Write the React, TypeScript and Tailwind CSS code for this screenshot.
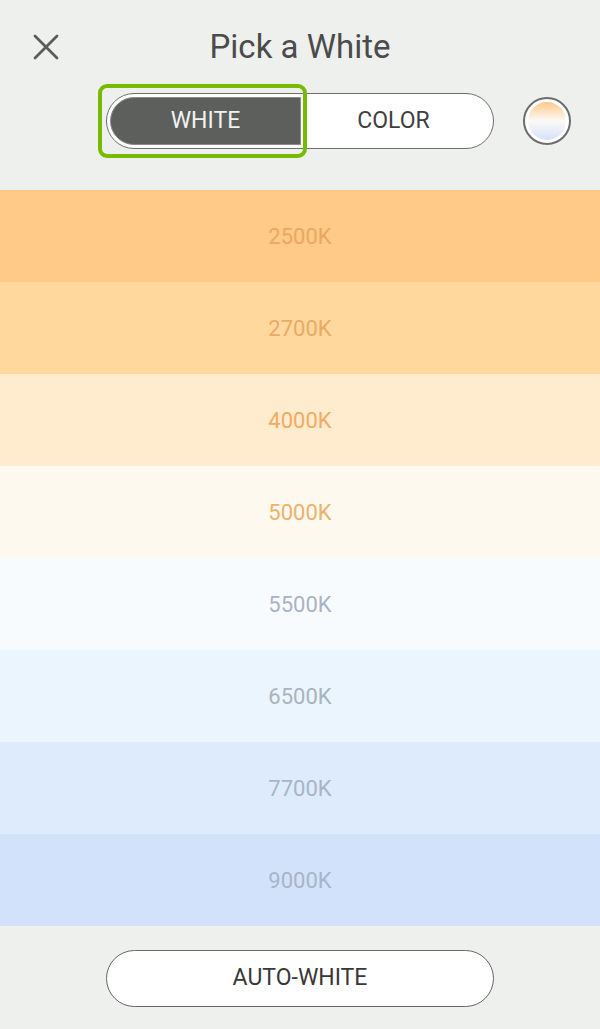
const temps = [
  { label: "2500K", bg: "bg-[#ffc987]", text: "text-[#eba760]" },
  { label: "2700K", bg: "bg-[#ffd89e]", text: "text-[#ebaa66]" },
  { label: "4000K", bg: "bg-[#ffebcd]", text: "text-[#eeac64]" },
  { label: "5000K", bg: "bg-[#fdf9ee]", text: "text-[#eeb169]" },
  { label: "5500K", bg: "bg-[#f8fbfe]", text: "text-[#aab3c4]" },
  { label: "6500K", bg: "bg-[#ebf5fe]", text: "text-[#aab3c0]" },
  { label: "7700K", bg: "bg-[#deebfd]", text: "text-[#a9b4c4]" },
  { label: "9000K", bg: "bg-[#d3e2fb]", text: "text-[#a8b5c8]" },
];

export default function App() {
  return (
    <main
      className="w-[600px] h-[1029px] bg-[#eef0ee] flex flex-col overflow-hidden"
      style={{ fontFamily: "Roboto, 'Liberation Sans', sans-serif" }}
    >
      {/* Header */}
      <header className="relative h-[93px] flex flex-col items-center">
        <button className="absolute left-[33px] top-[34px] w-[26px] h-[26px] flex items-center justify-center">
          <svg width="26" height="26" viewBox="0 0 26 26">
            <path d="M2 2 L24 24 M24 2 L2 24" stroke="#5b5b5b" strokeWidth="2.8" strokeLinecap="round" />
          </svg>
        </button>
        <h1 className="mt-[26px] text-[33px] leading-[42px] text-[#4b4b4b]">Pick a White</h1>
      </header>

      {/* Segmented control + swatch */}
      <div className="relative h-[97px] flex items-start">
        <div className="ml-[106px] w-[388px] h-[56px] rounded-full border-[1.5px] border-[#6e6e6e] bg-white p-[3px] flex">
          <div className="w-[191px] h-full rounded-l-full border border-[#8a8a8a] bg-[#5d5f5c] flex items-center justify-center">
            <span className="text-[23px] text-[#f2f2f2]">WHITE</span>
          </div>
          <div className="flex-1 flex items-center justify-center pr-[4px]">
            <span className="text-[23px] text-[#3f3f3f]">COLOR</span>
          </div>
        </div>
        <div className="absolute left-[98px] top-[-9px] w-[209px] h-[74px] rounded-[9px] border-[4px] border-[#77bb00]" />
        <div className="ml-[29px] mt-[4px] w-[48px] h-[48px] rounded-full border-2 border-[#6c6c6c] p-[3px] bg-white">
          <div className="w-full h-full rounded-full bg-gradient-to-b from-[#ffc88a] via-[#fbfaf6] to-[#d6e2fb]" />
        </div>
      </div>

      {/* Temperatures */}
      <div className="flex flex-col">
        {temps.map((t) => (
          <div key={t.label} className={`h-[92px] flex items-center justify-center ${t.bg}`}>
            <span className={`text-[22px] ${t.text}`}>{t.label}</span>
          </div>
        ))}
      </div>

      {/* Auto white */}
      <div className="flex justify-center pt-[24px]">
        <button className="w-[388px] h-[57px] rounded-full border-[1.5px] border-[#666] bg-white text-[23px] text-[#383838] flex items-center justify-center">
          AUTO-WHITE
        </button>
      </div>
    </main>
  );
}
